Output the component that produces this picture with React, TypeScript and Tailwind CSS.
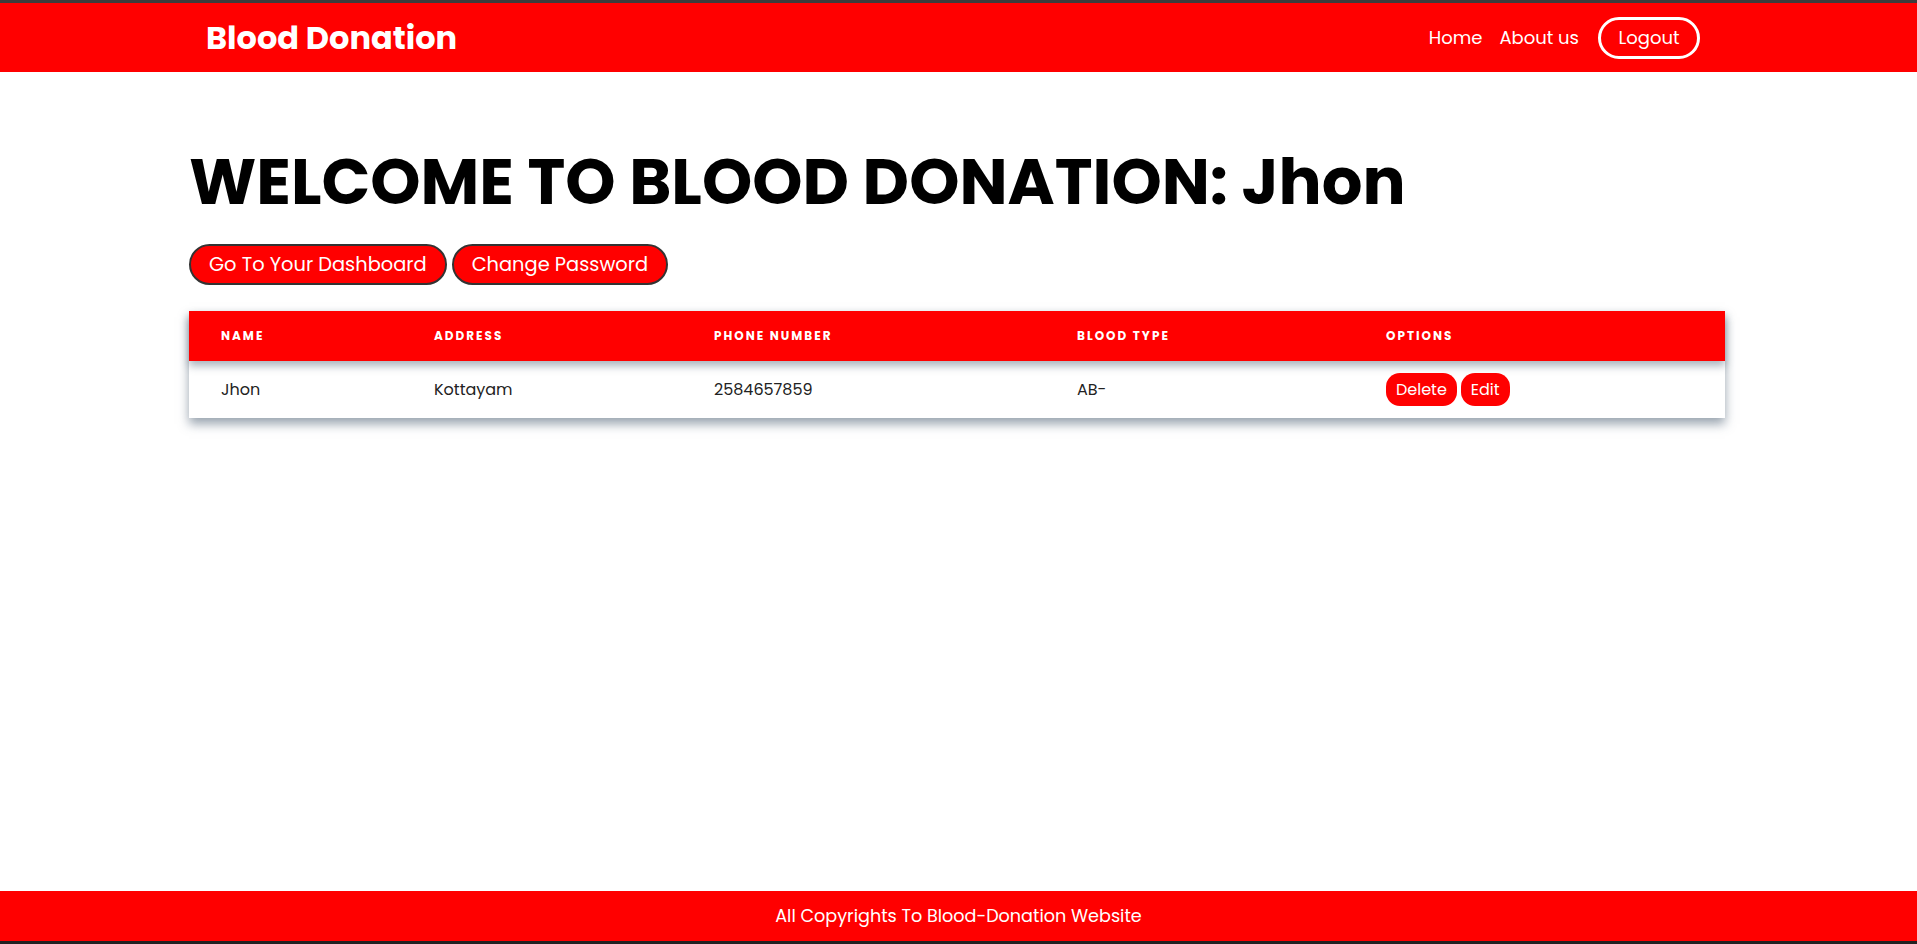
export default function App() {
  return (
    <div className="min-h-screen flex flex-col bg-white font-['Poppins','Inter',sans-serif]">
      <div className="h-[3px] bg-[#3c3c3c]" />

      <nav className="h-[69px] bg-[#ff0000] flex items-center justify-between pl-[206px] pr-[217px]">
        <span className="text-[32px] font-bold text-white">Blood Donation</span>
        <div className="flex items-center text-white text-[18px]">
          <a href="#">Home</a>
          <a href="#" className="ml-[17px]">About us</a>
          <button className="ml-[19px] h-[42px] w-[102px] rounded-full border-[3px] border-white">
            Logout
          </button>
        </div>
      </nav>

      <main className="flex-1 px-[189px]">
        <h1 className="mt-[78px] text-[64px] leading-none font-bold text-black">
          WELCOME TO BLOOD DONATION: Jhon
        </h1>

        <div className="mt-[30px] flex gap-[5px]">
          <button className="h-[41px] px-[18px] rounded-full border-2 border-[#333] bg-[#ff0000] text-white text-[19.4px]">
            Go To Your Dashboard
          </button>
          <button className="h-[41px] px-[18px] rounded-full border-2 border-[#333] bg-[#ff0000] text-white text-[19.4px]">
            Change Password
          </button>
        </div>

        <table className="mt-[26px] w-[1536px] table-fixed border-collapse shadow-[0_6px_10px_rgba(70,90,110,0.55)]">
          <colgroup>
            <col className="w-[213px]" />
            <col className="w-[280px]" />
            <col className="w-[363px]" />
            <col className="w-[309px]" />
            <col className="w-[371px]" />
          </colgroup>
          <thead className="bg-[#ff0000] shadow-[0_5px_8px_rgba(70,90,110,0.45)]">
            <tr className="h-[50px] text-left text-white text-[12px] font-extrabold tracking-[2px]">
              <th className="pl-[32px]">NAME</th>
              <th className="pl-[32px]">ADDRESS</th>
              <th className="pl-[32px]">PHONE NUMBER</th>
              <th className="pl-[32px]">BLOOD TYPE</th>
              <th className="pl-[32px]">OPTIONS</th>
            </tr>
          </thead>
          <tbody>
            <tr className="h-[57px] text-[16px] text-[#222]">
              <td className="pl-[32px]">Jhon</td>
              <td className="pl-[32px]">Kottayam</td>
              <td className="pl-[32px]">2584657859</td>
              <td className="pl-[32px]">AB-</td>
              <td className="pl-[32px]">
                <div className="flex gap-[4px]">
                  <button className="h-[33px] px-[10px] rounded-[14px] bg-[#ff0000] text-white text-[16px]">
                    Delete
                  </button>
                  <button className="h-[33px] px-[10px] rounded-[14px] bg-[#ff0000] text-white text-[16px]">
                    Edit
                  </button>
                </div>
              </td>
            </tr>
          </tbody>
        </table>
      </main>

      <footer className="h-[50px] bg-[#ff0000] flex items-center justify-center text-white text-[17.6px]">
        All Copyrights To Blood-Donation Website
      </footer>
      <div className="h-[3px] bg-[#222]" />
    </div>
  );
}
